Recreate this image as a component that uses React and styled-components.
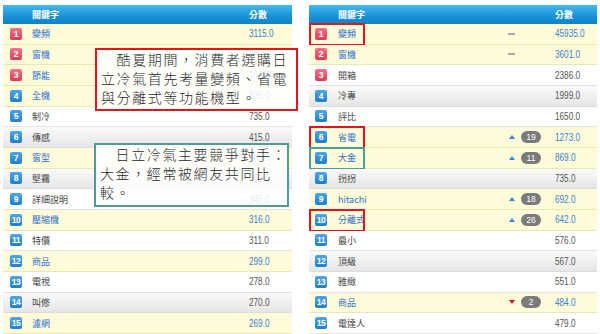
import React from "react";
import styled, { createGlobalStyle, css } from "styled-components";

const Global = createGlobalStyle`
  html, body { margin: 0; padding: 0; background: #fff; }
  body { width: 600px; height: 334px; overflow: hidden; font-family: "Liberation Sans", Arial, sans-serif; }
`;

const Page = styled.div`
  position: relative;
  display: flex;
  gap: 17px;
  padding: 5px 3px 0 3px;
  width: 600px;
  height: 334px;
  box-sizing: border-box;
  overflow: hidden;
`;

const Table = styled.div`
  width: ${(p) => p.$w}px;
  display: flex;
  flex-direction: column;
`;

const Header = styled.div`
  height: 19px;
  display: grid;
  grid-template-columns: ${(p) => p.$cols};
  align-items: center;
  background: linear-gradient(#45b8ee, #1b94da 55%, #0a83cc);
  color: #fff;
  font-family: "Noto Sans CJK TC", sans-serif;
  font-weight: 700;
  font-size: 9px;
`;

const HeadCell = styled.div`
  grid-column: ${(p) => p.$col};
`;

const rowBg = {
  yellow: css`
    background: #fdfbd8;
    border-bottom: 1px solid #ebe7b4;
  `,
  white: css`
    background: #fff;
    border-bottom: 1px solid #e2e2e2;
  `,
  gray: css`
    background: linear-gradient(#fafafa, #e6e6e6);
    border-bottom: 1px solid #dcdcdc;
  `,
};

const Row = styled.div`
  position: relative;
  box-sizing: border-box;
  height: 20.667px;
  display: grid;
  grid-template-columns: ${(p) => p.$cols};
  align-items: center;
  ${(p) => rowBg[p.$bg]}
`;

const Badge = styled.span`
  justify-self: start;
  margin-left: ${(p) => p.$ml}px;
  width: 12px;
  height: 12px;
  border-radius: 2px;
  display: flex;
  align-items: center;
  justify-content: center;
  color: #fff;
  font-family: "Liberation Sans", Arial, sans-serif;
  font-weight: 700;
  font-size: 8.5px;
  letter-spacing: -0.4px;
  background: ${(p) =>
    p.$top
      ? "linear-gradient(#f2728a, #e23a55)"
      : "linear-gradient(#4ea6e6, #1f7fcc)"};
`;

const Keyword = styled.span`
  font-family: "Noto Sans CJK TC", "Liberation Sans", sans-serif;
  font-size: 9px;
  color: ${(p) => (p.$hl ? "#2f72d2" : "#444")};
  white-space: nowrap;
`;

const Score = styled.span`
  justify-self: start;
  display: inline-block;
  font-family: "Liberation Sans", Arial, sans-serif;
  font-size: 10px;
  transform: scaleX(0.82);
  transform-origin: left center;
  white-space: nowrap;
  color: ${(p) => (p.$hl ? "#3b7fd6" : "#555")};
`;

const Dash = styled.span`
  justify-self: start;
  width: 7px;
  height: 2px;
  background: #a9a9a9;
`;

const Up = styled.span`
  justify-self: start;
  margin-left: 1px;
  width: 0;
  height: 0;
  border-left: 3px solid transparent;
  border-right: 3px solid transparent;
  border-bottom: 4px solid #2e8bd8;
`;

const Down = styled.span`
  justify-self: start;
  margin-left: 1px;
  width: 0;
  height: 0;
  border-left: 3px solid transparent;
  border-right: 3px solid transparent;
  border-top: 4px solid #d81a30;
`;

const Pill = styled.span`
  justify-self: start;
  width: 20px;
  height: 12px;
  border-radius: 6px;
  background: #7b7b7b;
  color: #fff;
  font-family: "Liberation Sans", Arial, sans-serif;
  font-size: 8.5px;
  display: flex;
  align-items: center;
  justify-content: center;
`;

const Mark = styled.span`
  position: absolute;
  left: 0;
  top: -1px;
  width: 56px;
  height: 23px;
  box-sizing: border-box;
  border: 2px solid ${(p) => (p.$teal ? "#4f9b96" : "#e3141c")};
  pointer-events: none;
`;

const Callout = styled.div`
  position: absolute;
  left: ${(p) => p.$x}px;
  top: ${(p) => p.$y}px;
  width: ${(p) => p.$w}px;
  height: ${(p) => p.$h}px;
  box-sizing: border-box;
  border: 2px solid ${(p) => p.$color};
  background: rgba(255, 255, 255, 0.86);
  padding: 0 0 0 4px;
  font-family: "Noto Sans CJK TC", sans-serif;
  font-weight: 300;
  font-size: 14px;
  line-height: 19px;
  letter-spacing: 1.6px;
  color: #2a2a2a;
  white-space: pre;
`;

const leftRows = [
  ["變頻", "3115.0", "y"],
  ["窗機", "3601.0", "y"],
  ["節能", "1035.0", "y"],
  ["全機", "835.0", "y"],
  ["制冷", "735.0", "w"],
  ["傳感", "415.0", "g"],
  ["窗型", "405.0", "y"],
  ["堅霧", "360.0", "g"],
  ["詳細說明", "345.0", "w"],
  ["壓縮機", "316.0", "y"],
  ["特價", "311.0", "w"],
  ["商品", "299.0", "y"],
  ["電視", "278.0", "w"],
  ["叫修", "270.0", "g"],
  ["濾網", "269.0", "y"],
];

const rightRows = [
  { k: "變頻", s: "45935.0", bg: "y", t: "dash", mark: "red" },
  { k: "窗機", s: "3601.0", bg: "y", t: "dash" },
  { k: "開箱", s: "2386.0", bg: "w" },
  { k: "冷專", s: "1999.0", bg: "g" },
  { k: "評比", s: "1650.0", bg: "w" },
  { k: "省電", s: "1273.0", bg: "y", t: "up", n: "19", mark: "red" },
  { k: "大金", s: "869.0", bg: "y", t: "up", n: "11", mark: "teal" },
  { k: "拐拐", s: "735.0", bg: "g" },
  { k: "hitachi", s: "692.0", bg: "y", t: "up", n: "18" },
  { k: "分離式", s: "642.0", bg: "y", t: "up", n: "26", mark: "red" },
  { k: "最小", s: "576.0", bg: "w" },
  { k: "頂級", s: "567.0", bg: "g" },
  { k: "雅緻", s: "551.0", bg: "w" },
  { k: "商品", s: "484.0", bg: "y", t: "down", n: "2" },
  { k: "電達人", s: "479.0", bg: "w" },
];

const bgName = { y: "yellow", w: "white", g: "gray" };

const LEFT_COLS = "29px 1fr 43px";
const RIGHT_COLS = "29px 1fr 13px 34px 42px";

const redText = "\u3000酷夏期間，消費者選購日\n立冷氣首先考量變頻、省電\n與分離式等功能機型。";
const tealText = "\u3000日立冷氣主要競爭對手：\n大金，經常被網友共同比\n較。";

function Trend({ t }) {
  if (t === "dash") return <Dash />;
  if (t === "up") return <Up />;
  if (t === "down") return <Down />;
  return <span />;
}

export default function App() {
  return (
    <>
      <Global />
      <Page>
        <Table $w={289}>
          <Header $cols={LEFT_COLS}>
            <HeadCell $col={2}>關鍵字</HeadCell>
            <HeadCell $col={3}>分數</HeadCell>
          </Header>
          {leftRows.map(([k, s, bg], i) => (
            <Row key={i} $cols={LEFT_COLS} $bg={bgName[bg]}>
              <Badge $ml={7} $top={i < 3}>{i + 1}</Badge>
              <Keyword $hl={bg === "y"}>{k}</Keyword>
              <Score $hl={bg === "y"}>{s}</Score>
            </Row>
          ))}
        </Table>
        <Table $w={288}>
          <Header $cols={RIGHT_COLS}>
            <HeadCell $col={2}>關鍵字</HeadCell>
            <HeadCell $col={5}>分數</HeadCell>
          </Header>
          {rightRows.map((r, i) => (
            <Row key={i} $cols={RIGHT_COLS} $bg={bgName[r.bg]}>
              <Badge $ml={6} $top={i < 3}>{i + 1}</Badge>
              <Keyword $hl={r.bg === "y"}>{r.k}</Keyword>
              <Trend t={r.t} />
              {r.n ? <Pill>{r.n}</Pill> : <span />}
              <Score $hl={r.bg === "y"}>{r.s}</Score>
              {r.mark && <Mark $teal={r.mark === "teal"} />}
            </Row>
          ))}
        </Table>
        <Callout $x={95} $y={48} $w={203} $h={63} $color="#e3141c">
          {redText}
        </Callout>
        <Callout $x={94} $y={143} $w={195} $h={64} $color="#4f9b96">
          {tealText}
        </Callout>
      </Page>
    </>
  );
}
